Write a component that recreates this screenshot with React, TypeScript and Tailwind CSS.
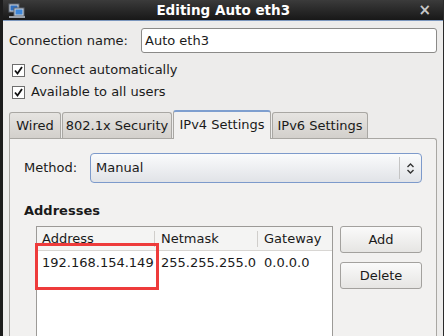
import React from 'react';

const font = { fontFamily: '"DejaVu Sans", sans-serif' };

function NetIcon() {
  return (
    <svg width="18" height="16" viewBox="0 0 18 16">
      <rect x="1" y="1" width="10" height="8" fill="#c9ced6" stroke="#5b6472" />
      <rect x="2.5" y="2.5" width="7" height="5" fill="#2f6fc0" />
      <rect x="6" y="5" width="10" height="8" fill="#c9ced6" stroke="#5b6472" />
      <rect x="7.5" y="6.5" width="7" height="5" fill="#3d86d8" />
      <rect x="1" y="13" width="16" height="2" fill="#9aa1ab" />
    </svg>
  );
}

function Check() {
  return (
    <div className="w-[13px] h-[13px] bg-white border border-[#6e6e6e] flex items-center justify-center">
      <svg width="11" height="11" viewBox="0 0 11 11">
        <path d="M2 5.5 L4.5 8.5 L9 2" fill="none" stroke="#111" strokeWidth="1.8" />
      </svg>
    </div>
  );
}

export default function App() {
  const tabs = [
    { label: 'Wired', w: 'w-[52px]' },
    { label: '802.1x Security', w: 'w-[110px]' },
  ];

  return (
    <div
      style={font}
      className="w-[444px] h-[336px] overflow-hidden bg-[#edeceb] text-[13px] text-[#1a1a1a] flex flex-col border-l-[3px] border-l-[#1c1c1c] border-r border-r-[#2a2a2a] whitespace-nowrap"
    >
      {/* Title bar */}
      <div className="h-[21px] shrink-0 -ml-[3px] -mr-px flex items-center bg-gradient-to-b from-[#3b3b3b] to-[#181818] border-b border-b-[#7b96bd]">
        <div className="ml-[8px] mt-[1px]">
          <NetIcon />
        </div>
        <div className="flex-1 text-center text-white font-bold text-[13.5px] pl-[2px]">Editing Auto eth3</div>
        <div className="mr-[13px] text-[#c8c8c8] font-bold text-[15px] leading-none">×</div>
      </div>

      <div className="flex-1 flex flex-col pl-[6px] pr-[6px]">
        {/* Connection name */}
        <div className="mt-[7px] flex items-center h-[25px]">
          <span className="w-[132px]">Connection name:</span>
          <div className="flex-1 h-[25px] bg-white border border-[#8b8a88] rounded-[3px] flex items-center pl-[3px]">
            Auto eth3
          </div>
        </div>

        {/* Checkboxes */}
        <div className="mt-[7px] flex items-center gap-[6px] pl-[3px] h-[20px]">
          <Check />
          <span>Connect automatically</span>
        </div>
        <div className="mt-[2px] flex items-center gap-[6px] pl-[3px] h-[20px]">
          <Check />
          <span>Available to all users</span>
        </div>

        {/* Tabs */}
        <div className="mt-[7px] flex items-end h-[29px]">
          {tabs.map((t) => (
            <div
              key={t.label}
              className={`${t.w} h-[26px] mr-px flex items-center justify-center bg-gradient-to-b from-[#e6e4e1] to-[#d3d0cc] border border-[#a9a7a3] border-b-0 rounded-t-[3px]`}
            >
              {t.label}
            </div>
          ))}
          <div className="w-[98px] h-[29px] mr-px flex items-center justify-center bg-[#f2f1f0] border border-[#a9a7a3] border-t-2 border-t-[#7f9fcf] border-b-0 rounded-t-[3px] relative z-10 -mb-px pb-[2px]">
            IPv4 Settings
          </div>
          <div className="w-[96px] h-[26px] flex items-center justify-center bg-gradient-to-b from-[#e6e4e1] to-[#d3d0cc] border border-[#a9a7a3] border-b-0 rounded-t-[3px]">
            IPv6 Settings
          </div>
        </div>

        {/* Panel */}
        <div className="flex-1 bg-[#f2f1f0] border border-[#a9a7a3] border-b-0 rounded-tr-[3px] flex flex-col pl-[14px] pr-[14px]">
          <div className="mt-[14px] flex items-center h-[30px]">
            <span className="w-[66px]">Method:</span>
            <div className="flex-1 h-[30px] rounded-[4px] border border-[#7d9acb] bg-gradient-to-b from-[#fafbfc] to-[#e1e3e7] flex items-center">
              <span className="flex-1 pl-[5px]">Manual</span>
              <div className="w-px h-[22px] bg-[#c4c4c4]" />
              <div className="w-[21px] flex items-center justify-center">
                <svg width="9" height="13" viewBox="0 0 9 13">
                  <path d="M1.5 5 L4.5 2 L7.5 5 M1.5 8 L4.5 11 L7.5 8" fill="none" stroke="#333" strokeWidth="1.4" />
                </svg>
              </div>
            </div>
          </div>

          <div className="mt-[19px] font-bold h-[18px] flex items-center">Addresses</div>

          <div className="mt-[6px] flex flex-1 gap-[7px] pl-[12px]">
            {/* List */}
            <div className="w-[297px] bg-white border border-[#9c9a97] border-b-0 relative flex flex-col">
              <div className="flex h-[24px] items-center border-b border-b-[#d8d6d3] bg-[#f4f4f3]">
                <div className="w-[118px] pl-[5px] border-r border-r-[#d0cecb] h-[16px] flex items-center">Address</div>
                <div className="w-[103px] pl-[6px] border-r border-r-[#d0cecb] h-[16px] flex items-center">Netmask</div>
                <div className="flex-1 pl-[6px] h-[16px] flex items-center">Gateway</div>
              </div>
              <div className="flex h-[24px] items-center">
                <div className="w-[118px] pl-[5px]">192.168.154.149</div>
                <div className="w-[103px] pl-[6px]">255.255.255.0</div>
                <div className="flex-1 pl-[6px]">0.0.0.0</div>
              </div>
              <div className="absolute left-[-2px] top-[16px] w-[124px] h-[47px] border-[3px] border-[#ee3b3b]" />
            </div>

            {/* Buttons */}
            <div className="flex flex-col gap-[9px]">
              <div className="w-[82px] h-[27px] rounded-[3px] border border-[#a3a19e] bg-gradient-to-b from-[#fafafa] to-[#e6e5e3] flex items-center justify-center">
                Add
              </div>
              <div className="w-[82px] h-[27px] rounded-[3px] border border-[#a3a19e] bg-gradient-to-b from-[#fafafa] to-[#e6e5e3] flex items-center justify-center">
                Delete
              </div>
            </div>
          </div>
        </div>
      </div>
    </div>
  );
}
